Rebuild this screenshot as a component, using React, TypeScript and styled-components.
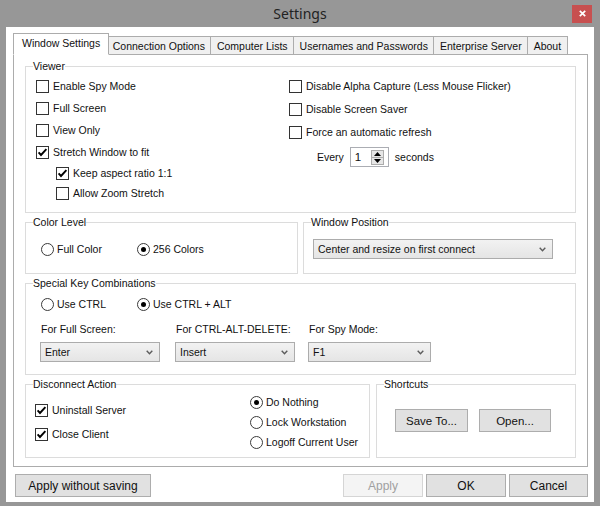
import React from 'react';
import styled, { createGlobalStyle } from 'styled-components';

const GlobalStyle = createGlobalStyle`
  html, body {
    margin: 0;
    padding: 0;
    background: #979797;
  }
  * {
    box-sizing: border-box;
  }
`;

const Frame = styled.div`
  width: 600px;
  height: 506px;
  display: flex;
  flex-direction: column;
  padding: 0 6px 4px;
  background: #979797;
  font-family: 'Liberation Sans', Arial, sans-serif;
  font-size: 10.5px;
  color: #111;
  overflow: hidden;
`;

const TitleBar = styled.div`
  height: 27px;
  margin: 0 -6px;
  padding: 0 8px;
  display: grid;
  grid-template-columns: 1fr auto 1fr;
  align-items: center;
`;

const Title = styled.div`
  grid-column: 2;
  font-family: 'Noto Sans', 'Open Sans', sans-serif;
  font-size: 14px;
  color: #222;
`;

const CloseButton = styled.div`
  justify-self: end;
  width: 20px;
  height: 18px;
  background: #c75050;
  display: flex;
  align-items: center;
  justify-content: center;
`;

const Client = styled.div`
  flex: 1;
  background: #fff;
  display: flex;
  flex-direction: column;
  padding: 6px 6px 5px 7px;
`;

const TabStrip = styled.div`
  display: flex;
  align-items: flex-end;
  height: 21px;
  padding-left: 2px;
`;

const Tab = styled.div<{ $active?: boolean }>`
  height: ${p => (p.$active ? 22 : 18)}px;
  margin: 0 ${p => (p.$active ? -2 : 0)}px ${p => (p.$active ? -1 : 0)}px;
  padding: 0 ${p => (p.$active ? 8 : 5.5)}px ${p => (p.$active ? 2 : 0)}px;
  display: flex;
  align-items: center;
  white-space: nowrap;
  border: 1px solid #acacac;
  border-bottom: ${p => (p.$active ? '1px solid #fff' : 'none')};
  background: ${p => (p.$active ? '#fff' : '#f0f0f0')};
  position: relative;
  z-index: ${p => (p.$active ? 2 : 1)};
  & + & {
    margin-left: ${p => (p.$active ? -2 : -1)}px;
  }
`;

const Panel = styled.div`
  flex: 1;
  border: 1px solid #acacac;
  padding: 4px 11px 8px;
  display: flex;
  flex-direction: column;
  gap: 2px;
`;

const Group = styled.fieldset`
  margin: 0;
  padding: 0;
  min-width: 0;
  border: 1px solid #dcdcdc;
`;

const Legend = styled.legend`
  margin-left: 7px;
  padding: 0;
  line-height: 14px;
`;

const SplitRow = styled.div<{ $first: number; $gap: number }>`
  display: grid;
  grid-template-columns: ${p => p.$first}px 1fr;
  gap: ${p => p.$gap}px;
`;

const ViewerBody = styled.div`
  display: grid;
  grid-template-columns: 253px 1fr;
  padding: 2px 0 9px 10px;
`;

const DisconnectBody = styled.div`
  display: grid;
  grid-template-columns: 215px 1fr;
  padding: 0 0 5px 9px;
`;

const Column = styled.div<{ $gap?: number; $top?: number }>`
  display: flex;
  flex-direction: column;
  gap: ${p => p.$gap ?? 0}px;
  padding-top: ${p => p.$top ?? 0}px;
`;

const Row = styled.label<{ $h: number; $indent: number }>`
  display: flex;
  align-items: center;
  height: ${p => p.$h}px;
  padding-left: ${p => p.$indent}px;
  white-space: nowrap;
`;

const Box = styled.span`
  flex: none;
  width: 13px;
  height: 13px;
  margin-right: 4px;
  border: 1px solid #333;
  background: #fff;
  display: inline-flex;
  align-items: center;
  justify-content: center;
`;

const Circle = styled.span<{ $on: boolean }>`
  flex: none;
  width: 13px;
  height: 13px;
  margin-right: 3px;
  border: 1px solid #3a3a3a;
  border-radius: 50%;
  background: #fff;
  display: inline-flex;
  align-items: center;
  justify-content: center;
  &::after {
    content: '';
    width: 5px;
    height: 5px;
    border-radius: 50%;
    background: ${p => (p.$on ? '#000' : 'transparent')};
  }
`;

const SpinRow = styled.div`
  display: flex;
  align-items: center;
  height: 20px;
  margin-top: 3px;
  padding-left: 28px;
`;

const SpinBox = styled.div`
  width: 39px;
  height: 20px;
  margin: 0 6px;
  padding: 0 4px 0 4px;
  border: 1px solid #abadb3;
  display: flex;
  align-items: center;
  justify-content: space-between;
  font-size: 11.5px;
`;

const SpinButtons = styled.div`
  width: 13px;
  height: 15px;
  display: flex;
  flex-direction: column;
  border: 1px solid #acacac;
  background: #e6e6e6;
`;

const SpinHalf = styled.div`
  flex: 1;
  display: flex;
  align-items: center;
  justify-content: center;
  & + & {
    border-top: 1px solid #acacac;
  }
`;

const RadioLine = styled.div<{ $top: number; $bottom: number }>`
  display: grid;
  grid-template-columns: 96px auto;
  padding: ${p => p.$top}px 0 ${p => p.$bottom}px 15px;
`;

const SelectWrap = styled.div`
  padding: 10px 0 14px 9px;
`;

const Select = styled.div<{ $w: number }>`
  width: ${p => p.$w}px;
  height: 20px;
  padding: 0 6px 0 4px;
  border: 1px solid #acacac;
  background: linear-gradient(#f2f2f2, #e5e5e5);
  display: flex;
  align-items: center;
  justify-content: space-between;
  white-space: nowrap;
`;

const KeyGrid = styled.div`
  display: grid;
  grid-template-columns: 135px 133px 123px;
  grid-template-rows: 14px 20px;
  row-gap: 6px;
  padding: 8px 0 12px 14px;
`;

const KeyLabel = styled.div`
  padding-left: 1px;
  line-height: 14px;
`;

const ShortcutBody = styled.div`
  display: flex;
  gap: 11px;
  padding: 18px 0 0 18px;
`;

const Button = styled.button<{ $w: number; $fs?: number }>`
  width: ${p => p.$w}px;
  height: 23px;
  padding: 0;
  border: 1px solid #adadad;
  background: #e1e1e1;
  font-family: 'Liberation Sans', Arial, sans-serif;
  font-size: ${p => p.$fs ?? 12}px;
  color: #111;
  &:disabled {
    background: #f4f4f4;
    border-color: #d5d5d5;
    color: #a0a0a0;
  }
`;

const ButtonBar = styled.div`
  display: flex;
  gap: 3px;
  margin-top: 7px;
  padding-left: 2px;
`;

const Spacer = styled.div`
  flex: 1;
`;

const Chevron = () => (
  <svg width="7" height="5" viewBox="0 0 7 5">
    <polyline points="0.7,0.8 3.5,3.8 6.3,0.8" fill="none" stroke="#5c5c5c" strokeWidth="1.4" />
  </svg>
);

const Check: React.FC<{ label: string; checked?: boolean; h?: number; indent?: number }> = ({
  label,
  checked,
  h = 22,
  indent = 0,
}) => (
  <Row $h={h} $indent={indent}>
    <Box>
      {checked && (
        <svg width="11" height="11" viewBox="0 0 11 11">
          <polyline points="1.6,5.4 4,8 9.4,2.2" fill="none" stroke="#000" strokeWidth="1.9" />
        </svg>
      )}
    </Box>
    {label}
  </Row>
);

const Radio: React.FC<{ label: string; on?: boolean; h?: number }> = ({ label, on = false, h = 20 }) => (
  <Row $h={h} $indent={0}>
    <Circle $on={on} />
    {label}
  </Row>
);

const tabs = [
  'Window Settings',
  'Connection Options',
  'Computer Lists',
  'Usernames and Passwords',
  'Enterprise Server',
  'About',
];

const keys = [
  { label: 'For Full Screen:', value: 'Enter', w: 120 },
  { label: 'For CTRL-ALT-DELETE:', value: 'Insert', w: 120 },
  { label: 'For Spy Mode:', value: 'F1', w: 123 },
];

export default function App() {
  return (
    <>
      <GlobalStyle />
      <Frame>
        <TitleBar>
          <Title>Settings</Title>
          <CloseButton>
            <svg width="7" height="7" viewBox="0 0 7 7">
              <path d="M0.8 0.8 L6.2 6.2 M6.2 0.8 L0.8 6.2" stroke="#fff" strokeWidth="1.7" />
            </svg>
          </CloseButton>
        </TitleBar>
        <Client>
          <TabStrip>
            {tabs.map((t, i) => (
              <Tab key={t} $active={i === 0}>
                {t}
              </Tab>
            ))}
          </TabStrip>
          <Panel>
            <Group>
              <Legend>Viewer</Legend>
              <ViewerBody>
                <Column>
                  <Check label="Enable Spy Mode" />
                  <Check label="Full Screen" />
                  <Check label="View Only" />
                  <Check label="Stretch Window to fit" checked />
                  <Check label="Keep aspect ratio 1:1" checked h={20} indent={20} />
                  <Check label="Allow Zoom Stretch" h={20} indent={20} />
                </Column>
                <Column $gap={1}>
                  <Check label="Disable Alpha Capture (Less Mouse Flicker)" />
                  <Check label="Disable Screen Saver" />
                  <Check label="Force an automatic refresh" />
                  <SpinRow>
                    Every
                    <SpinBox>
                      1
                      <SpinButtons>
                        <SpinHalf>
                          <svg width="7" height="4" viewBox="0 0 7 4">
                            <path d="M0 4 L3.5 0 L7 4 Z" fill="#000" />
                          </svg>
                        </SpinHalf>
                        <SpinHalf>
                          <svg width="7" height="4" viewBox="0 0 7 4">
                            <path d="M0 0 L3.5 4 L7 0 Z" fill="#000" />
                          </svg>
                        </SpinHalf>
                      </SpinButtons>
                    </SpinBox>
                    seconds
                  </SpinRow>
                </Column>
              </ViewerBody>
            </Group>

            <SplitRow $first={273} $gap={5}>
              <Group>
                <Legend>Color Level</Legend>
                <RadioLine $top={10} $bottom={14}>
                  <Radio label="Full Color" />
                  <Radio label="256 Colors" on />
                </RadioLine>
              </Group>
              <Group>
                <Legend>Window Position</Legend>
                <SelectWrap>
                  <Select $w={240}>
                    Center and resize on first connect
                    <Chevron />
                  </Select>
                </SelectWrap>
              </Group>
            </SplitRow>

            <Group>
              <Legend>Special Key Combinations</Legend>
              <RadioLine $top={4} $bottom={0}>
                <Radio label="Use CTRL" />
                <Radio label="Use CTRL + ALT" on />
              </RadioLine>
              <KeyGrid>
                {keys.map(k => (
                  <KeyLabel key={k.label}>{k.label}</KeyLabel>
                ))}
                {keys.map(k => (
                  <Select key={k.value} $w={k.w}>
                    {k.value}
                    <Chevron />
                  </Select>
                ))}
              </KeyGrid>
            </Group>

            <SplitRow $first={345} $gap={6}>
              <Group>
                <Legend>Disconnect Action</Legend>
                <DisconnectBody>
                  <Column $top={7}>
                    <Check label="Uninstall Server" checked h={24} />
                    <Check label="Close Client" checked h={24} />
                  </Column>
                  <Column $top={1}>
                    <Radio label="Do Nothing" on />
                    <Radio label="Lock Workstation" />
                    <Radio label="Logoff Current User" />
                  </Column>
                </DisconnectBody>
              </Group>
              <Group>
                <Legend>Shortcuts</Legend>
                <ShortcutBody>
                  <Button $w={73} $fs={11.5}>Save To...</Button>
                  <Button $w={72} $fs={11.5}>Open...</Button>
                </ShortcutBody>
              </Group>
            </SplitRow>
          </Panel>
          <ButtonBar>
            <Button $w={136}>Apply without saving</Button>
            <Spacer />
            <Button $w={80} disabled>
              Apply
            </Button>
            <Button $w={80}>OK</Button>
            <Button $w={79}>Cancel</Button>
          </ButtonBar>
        </Client>
      </Frame>
    </>
  );
}
